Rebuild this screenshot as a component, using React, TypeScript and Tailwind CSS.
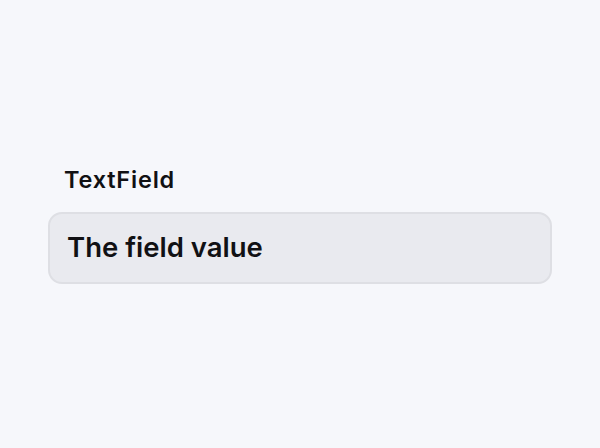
export default function App() {
  return (
    <div
      className="flex h-[448px] w-[600px] flex-col justify-center bg-[#f6f7fb] px-[48px] pt-[1px]"
      style={{ fontFamily: "Inter, 'Noto Sans', sans-serif" }}
    >
      <label className="mb-[17px] pl-[16px] text-[23.5px] font-semibold leading-[30px] tracking-[0.8px] text-[#111114]">
        TextField
      </label>
      <div className="flex h-[72px] w-[504px] items-center rounded-[14px] border-2 border-[#dedfe4] bg-[#e9eaef] px-[17px]">
        <input
          readOnly
          value="The field value"
          className="w-full bg-transparent text-[27.5px] font-semibold text-[#111114] outline-none"
        />
      </div>
    </div>
  );
}
